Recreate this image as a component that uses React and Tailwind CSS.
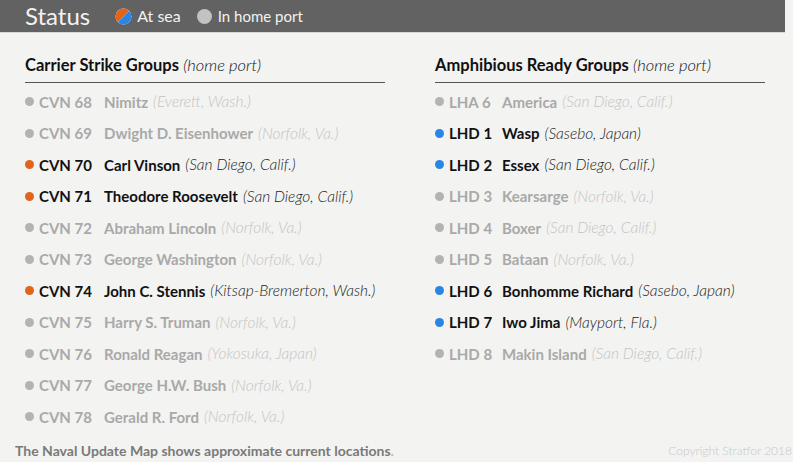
import React from "react";

const carriers = [
  { code: "CVN 68", name: "Nimitz", port: "Everett, Wash.", sea: false },
  { code: "CVN 69", name: "Dwight D. Eisenhower", port: "Norfolk, Va.", sea: false },
  { code: "CVN 70", name: "Carl Vinson", port: "San Diego, Calif.", sea: true },
  { code: "CVN 71", name: "Theodore Roosevelt", port: "San Diego, Calif.", sea: true },
  { code: "CVN 72", name: "Abraham Lincoln", port: "Norfolk, Va.", sea: false },
  { code: "CVN 73", name: "George Washington", port: "Norfolk, Va.", sea: false },
  { code: "CVN 74", name: "John C. Stennis", port: "Kitsap-Bremerton, Wash.", sea: true },
  { code: "CVN 75", name: "Harry S. Truman", port: "Norfolk, Va.", sea: false },
  { code: "CVN 76", name: "Ronald Reagan", port: "Yokosuka, Japan", sea: false },
  { code: "CVN 77", name: "George H.W. Bush", port: "Norfolk, Va.", sea: false },
  { code: "CVN 78", name: "Gerald R. Ford", port: "Norfolk, Va.", sea: false },
];

const amphibs = [
  { code: "LHA 6", name: "America", port: "San Diego, Calif.", sea: false },
  { code: "LHD 1", name: "Wasp", port: "Sasebo, Japan", sea: true },
  { code: "LHD 2", name: "Essex", port: "San Diego, Calif.", sea: true },
  { code: "LHD 3", name: "Kearsarge", port: "Norfolk, Va.", sea: false },
  { code: "LHD 4", name: "Boxer", port: "San Diego, Calif.", sea: false },
  { code: "LHD 5", name: "Bataan", port: "Norfolk, Va.", sea: false },
  { code: "LHD 6", name: "Bonhomme Richard", port: "Sasebo, Japan", sea: true },
  { code: "LHD 7", name: "Iwo Jima", port: "Mayport, Fla.", sea: true },
  { code: "LHD 8", name: "Makin Island", port: "San Diego, Calif.", sea: false },
];

const ShipRow = ({ ship, dotColor, codeWidth }) => (
  <div className="flex items-center h-[31.5px] whitespace-nowrap">
    <span
      className={`w-[9px] h-[9px] rounded-full mr-[5px] ${
        ship.sea ? dotColor : "bg-[#b3b3b3]"
      }`}
    />
    <span
      className={`font-bold ${codeWidth} ${
        ship.sea ? "text-[#111]" : "text-[#a9a9a9]"
      }`}
    >
      {ship.code}
    </span>
    <span className={`font-bold ${ship.sea ? "text-[#111]" : "text-[#a9a9a9]"}`}>
      {ship.name}
    </span>
    <span
      className={`italic font-light ml-[5px] text-[15.5px] ${
        ship.sea ? "text-[#222]" : "text-[#c4c4c4]"
      }`}
    >
      ({ship.port})
    </span>
  </div>
);

const Column = ({ title, ships, dotColor, codeWidth, width }) => (
  <div className={width}>
    <div className="text-[16.5px] leading-[24px] text-[#111] pb-[5px] border-b border-[#555] whitespace-nowrap">
      <span className="font-bold">{title}</span>{" "}
      <span className="italic font-light">(home port)</span>
    </div>
    <div className="pt-[3px] text-[15px]">
      {ships.map((s) => (
        <ShipRow key={s.code} ship={s} dotColor={dotColor} codeWidth={codeWidth} />
      ))}
    </div>
  </div>
);

export default function App() {
  return (
    <div
      className="w-[793px] h-[462px] bg-[#f3f3f1] overflow-hidden relative"
      style={{ fontFamily: "Lato, 'Open Sans', sans-serif" }}
    >
      {/* Legend bar */}
      <div className="w-[785px] h-[33px] bg-[#626262] border-b border-[#d8d8d8] flex items-center pl-[25px]">
        <span className="text-[24px] text-[#f2f2f2] mr-[25px] leading-none">Status</span>
        <svg width="17" height="17" viewBox="0 0 16 16" className="mr-[5px]">
          <circle cx="8" cy="8" r="7.5" fill="#fff" />
          <path d="M2.7 13.3 A6.2 6.2 0 0 1 13.3 2.7 Z" fill="#e0651c" />
          <path d="M13.3 2.7 A6.2 6.2 0 0 1 2.7 13.3 Z" fill="#2a86e4" />
        </svg>
        <span className="text-[16px] text-[#f2f2f2] mr-[16px]">At sea</span>
        <span className="w-[15px] h-[15px] rounded-full bg-[#c2c2c2] mr-[6px]" />
        <span className="text-[15px] text-[#f2f2f2]">In home port</span>
      </div>

      {/* Lists */}
      <div className="flex pl-[25px] pt-[20px] gap-[50px]">
        <Column
          title="Carrier Strike Groups"
          ships={carriers}
          dotColor="bg-[#e0651c]"
          codeWidth="w-[65px]"
          width="w-[360px]"
        />
        <Column
          title="Amphibious Ready Groups"
          ships={amphibs}
          dotColor="bg-[#2a86e4]"
          codeWidth="w-[53px]"
          width="w-[330px]"
        />
      </div>

      {/* Footer */}
      <div className="absolute left-[15px] right-[1px] bottom-[1px] flex items-end justify-between">
        <span className="text-[14px] font-bold text-[#7a7a7a]">
          The Naval Update Map shows approximate current locations<span className="text-[#bbb]">.</span>
        </span>
        <span className="text-[12px] font-light text-[#c8c8c8] pb-[1px]">Copyright Stratfor 2018</span>
      </div>
    </div>
  );
}
